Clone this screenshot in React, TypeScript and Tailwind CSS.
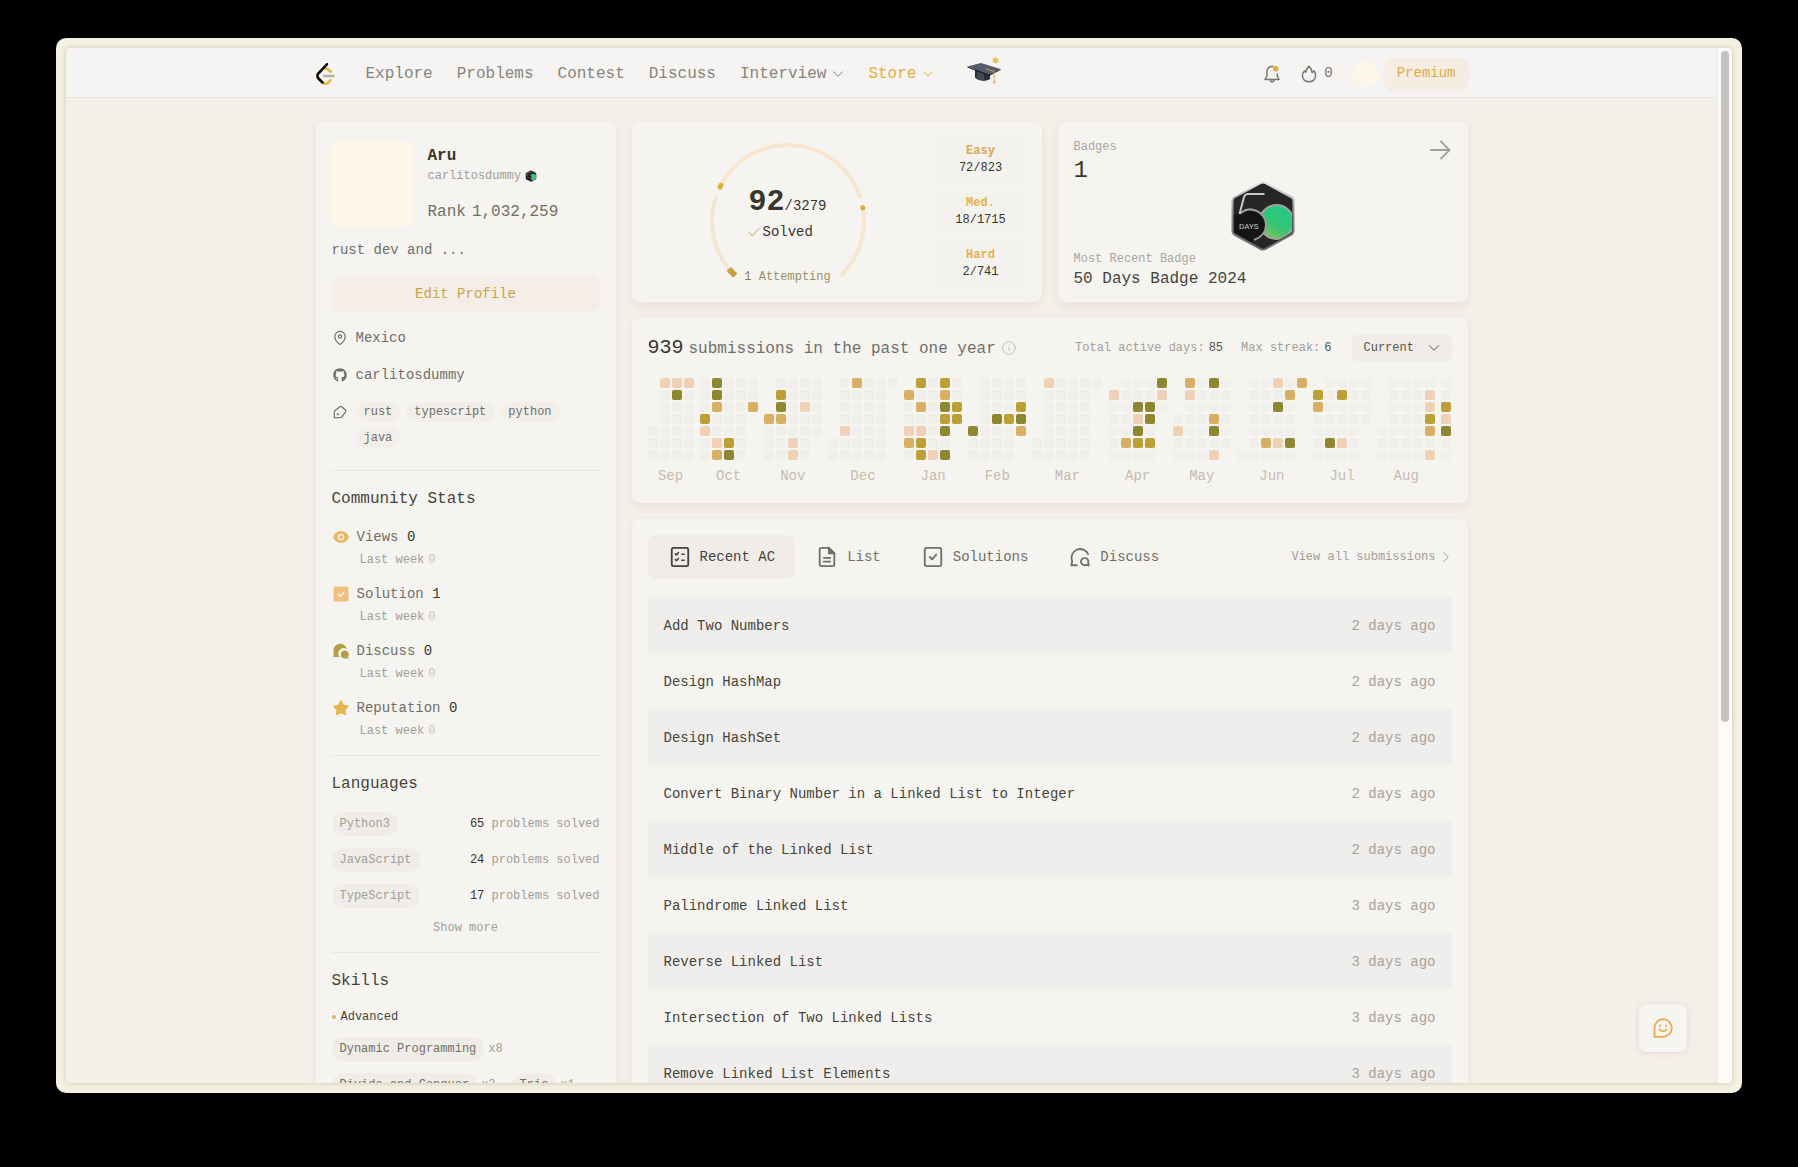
import React from "react";
import { FaGithub } from "react-icons/fa";

type Level = "P" | "T" | "G" | "O";

const levelClass: Record<Level, string> = {
  P: "bg-[#f0d1b7]",
  T: "bg-[#d7b066]",
  G: "bg-[#bca035]",
  O: "bg-[#8e8630]",
};

interface Month {
  label: string;
  start: number;
  days: number;
  marks: Record<string, Level>;
}

// Marks are keyed by "column-row" inside the month.
const months: Month[] = [
  { label: "Sep", start: 4, days: 24, marks: { "1-0": "P", "2-0": "P", "3-0": "P", "2-1": "O" } },
  {
    label: "Oct",
    start: 0,
    days: 31,
    marks: { "1-0": "O", "1-1": "O", "1-2": "T", "4-2": "T", "0-3": "G", "0-4": "P", "1-5": "P", "2-5": "G", "1-6": "T", "2-6": "O" },
  },
  {
    label: "Nov",
    start: 3,
    days: 30,
    marks: { "1-1": "G", "1-2": "O", "3-2": "P", "0-3": "T", "1-3": "T", "2-5": "P", "2-6": "P" },
  },
  { label: "Dec", start: 5, days: 31, marks: { "2-0": "T", "1-4": "P" } },
  {
    label: "Jan",
    start: 1,
    days: 31,
    marks: {
      "1-0": "G", "3-0": "G", "0-1": "T", "3-1": "T", "1-2": "T", "3-2": "O", "4-2": "G", "3-3": "G", "4-3": "G",
      "0-4": "P", "1-4": "P", "3-4": "O", "0-5": "T", "1-5": "G", "1-6": "G", "2-6": "P", "3-6": "O",
    },
  },
  {
    label: "Feb",
    start: 4,
    days: 29,
    marks: { "4-2": "G", "2-3": "O", "3-3": "G", "4-3": "O", "0-4": "O", "4-4": "T" },
  },
  { label: "Mar", start: 5, days: 31, marks: { "1-0": "P" } },
  {
    label: "Apr",
    start: 1,
    days: 30,
    marks: {
      "4-0": "O", "0-1": "P", "4-1": "P", "2-2": "O", "3-2": "O", "2-3": "P", "3-3": "O", "2-4": "O", "1-5": "T", "2-5": "G", "3-5": "G",
    },
  },
  {
    label: "May",
    start: 3,
    days: 31,
    marks: { "1-0": "T", "3-0": "O", "1-1": "P", "3-3": "T", "0-4": "P", "3-4": "O", "3-6": "P" },
  },
  {
    label: "Jun",
    start: 6,
    days: 30,
    marks: { "3-0": "P", "5-0": "T", "4-1": "T", "3-2": "O", "2-5": "T", "3-5": "P", "4-5": "O" },
  },
  { label: "Jul", start: 1, days: 31, marks: { "0-1": "G", "2-1": "G", "0-2": "T", "1-5": "O", "2-5": "P" } },
  { label: "Aug", start: 4, days: 31, marks: { "4-1": "P", "4-2": "P", "4-3": "G", "4-4": "T", "4-6": "P" } },
  { label: "", start: 0, days: 7, marks: { "0-2": "G", "0-3": "P", "0-4": "O" } },
];

const card = "rounded-lg bg-[#f6f4f1] shadow-[0_4px_10px_rgba(120,90,70,0.09)]";

function Chevron({ className }: { className: string }) {
  return (
    <svg viewBox="0 0 12 12" className={className} fill="none" stroke="currentColor" strokeLinecap="round" strokeLinejoin="round" aria-hidden="true">
      <path d="M1.5 3.8 6 8.3l4.5-4.5" />
    </svg>
  );
}

function LeetLogo() {
  return (
    <svg viewBox="0 0 95 111" className="h-[22px] w-[19px]" aria-hidden="true">
      <path
        fill="#e3b341"
        d="M68.0063 83.0664C70.5 80.5764 74.5366 80.5829 77.0223 83.0809C79.508 85.579 79.5015 89.6226 77.0078 92.1127L65.9346 103.17C55.7187 113.371 39.06 113.519 28.6718 103.513C28.6117 103.456 23.9861 98.9201 8.72653 83.957C-1.42528 74.0029 -2.43665 58.0749 7.11648 47.8464L24.9282 28.7745C34.4095 18.6219 51.887 17.5122 62.7275 26.2789L78.9048 39.362C81.6444 41.5776 82.0723 45.5985 79.8606 48.3429C77.6488 51.0873 73.635 51.5159 70.8954 49.3003L54.7182 36.2173C49.0488 31.6325 39.1314 32.2622 34.2394 37.5006L16.4274 56.5727C11.7767 61.5522 12.2861 69.574 17.6456 74.8292C28.851 85.8169 37.4869 94.2846 37.4969 94.2942C42.8977 99.496 51.6304 99.4184 56.9331 94.1234L68.0063 83.0664Z"
      />
      <path
        fill="#b9b09e"
        d="M41.1067 72.0014C37.5858 72.0014 34.7314 69.1421 34.7314 65.615C34.7314 62.0879 37.5858 59.2286 41.1067 59.2286H88.1245C91.6454 59.2286 94.4997 62.0879 94.4997 65.615C94.4997 69.1421 91.6454 72.0014 88.1245 72.0014H41.1067Z"
      />
      <path
        fill="#0c0b08"
        d="M49.9118 2.02335C52.3173 -0.55232 56.3517 -0.686894 58.9228 1.72277C61.494 4.13244 61.6284 8.17385 59.2229 10.7495L16.4276 56.5729C11.7768 61.552 12.2861 69.5738 17.6453 74.8292L37.4088 94.2091C39.9249 96.6764 39.968 100.72 37.505 103.24C35.042 105.761 31.0056 105.804 28.4895 103.337L8.72593 83.9567C-1.42529 74.0021 -2.43665 58.0741 7.1169 47.8463L49.9118 2.02335Z"
      />
    </svg>
  );
}

function GradCap() {
  return (
    <svg viewBox="0 0 36 32" className="h-8 w-9" aria-hidden="true">
      <path d="M8 13v8.500c3 3.600 11 4.500 15 1.500V16z" fill="#2c2f38" />
      <path d="M10 16v6.500c2 1.400 5 2 7 2V17z" fill="#454955" />
      <path d="M.5 10.500 14 7l19.500 6-11.500 5.500z" fill="#565c6d" />
      <path d="m.5 10.500 21.500 8 11.500-5.500v1l-11.500 6L.5 11.500z" fill="#23252d" />
      <path d="M19 13l8 2.500V22" fill="none" stroke="#c9a545" strokeWidth="1" />
      <path d="M27 21.500l1.800 5.500-3 .5z" fill="#e2be5a" />
      <path d="m28.500.500 1 2 2.300-.3-1 2.100 1.200 1.900-2.300.1-1.200 2-1.100-2-2.300-.1 1.200-1.900-1-2.100 2.200.3z" fill="#e6c04c" />
    </svg>
  );
}

function HexBadge({ className, id }: { className: string; id: string }) {
  return (
    <svg viewBox="0 0 64 70" className={className} role="img" aria-label="50 Days Badge">
      <defs>
        <linearGradient id={id + "-rim"} x1="0" y1="0" x2="0" y2="1">
          <stop offset="0" stopColor="#e4e3e0" />
          <stop offset="0.5" stopColor="#8a8a88" />
          <stop offset="1" stopColor="#6a6a68" />
        </linearGradient>
        <linearGradient id={id + "-green"} x1="0.2" y1="1" x2="0.7" y2="0">
          <stop offset="0" stopColor="#8cc152" />
          <stop offset="0.4" stopColor="#37c573" />
          <stop offset="1" stopColor="#1fcb87" />
        </linearGradient>
        <clipPath id={id + "-clip"}>
          <path d="M32 2.500 61 18.500v33L32 67.500 3 51.500v-33z" />
        </clipPath>
      </defs>
      <path
        d="M29.500 2.200q2.500-1.400 5 0L60 16q2.500 1.400 2.500 4v30q0 2.600-2.500 4L34.500 67.800q-2.500 1.400-5 0L4 54q-2.500-1.400-2.500-4V20q0-2.600 2.500-4z"
        fill="#262626"
        stroke={`url(#${id}-rim)`}
        strokeWidth="2"
      />
      <g clipPath={`url(#${id}-clip)`}>
        <circle cx="45.500" cy="41" r="17" fill={`url(#${id}-green)`} stroke="#a3a39f" strokeWidth="2" />
        <circle cx="18" cy="44" r="17" fill="#151515" />
        <path d="M9 32.500C20 23 35 32 35 44c0 7-5 12.500-12 15" fill="none" stroke="#9d9d9a" strokeWidth="2" />
        <path d="M33.500 13H17q-3 0-4 3L8.500 33" fill="none" stroke="#c9c9c5" strokeWidth="2" />
      </g>
      <text x="8" y="48" className="font-['Roboto',sans-serif] text-[8px]" fill="#c4c4c0">
        DAYS
      </text>
    </svg>
  );
}

function Header() {
  const nav = ["Explore", "Problems", "Contest", "Discuss"];
  return (
    <header className="h-[50px] shrink-0 border-b border-[#e6e4e2] bg-[#f5f4f2]">
      <div className="mx-auto flex h-full max-w-[1152px] items-center pt-0.5">
        <a href="#home" aria-label="Home" className="mr-8 w-[18px]">
          <LeetLogo />
        </a>
        <nav className="flex items-center gap-6 text-[16px] leading-6 text-[#85847d]">
          {nav.map((n) => (
            <a key={n} href={"#" + n.toLowerCase()}>
              {n}
            </a>
          ))}
          <button type="button" className="flex items-center gap-1.5">
            Interview
            <Chevron className="h-3 w-3" />
          </button>
          <button type="button" className="flex items-center gap-1.5 text-[#e5ad3c]">
            Store
            <Chevron className="h-3 w-3" />
          </button>
        </nav>
        <a href="#event" aria-label="Graduation event" className="ml-[33px] -mt-1">
          <GradCap />
        </a>
        <div className="ml-auto flex items-center">
          <button type="button" aria-label="Notifications" className="text-[#777670]">
            <svg viewBox="0 0 18 20" className="h-5 w-[18px]" fill="none" stroke="currentColor" strokeWidth="1.500" strokeLinecap="round" strokeLinejoin="round">
              <path d="M10 2.500C6.500 2 4 4.200 4 7.500V11.500L2 15.500h14L14.300 12V10" />
              <path d="M7.200 16c.3 1.300 1 1.900 1.900 1.900s1.600-.6 1.900-1.900" />
              <circle cx="12.800" cy="4.800" r="2.700" fill="#e0ac38" stroke="none" />
            </svg>
          </button>
          <button type="button" className="ml-5 flex items-center gap-[7px] text-[14px] text-[#777670]">
            <svg viewBox="0 0 16 18" className="h-[18px] w-4" fill="none" stroke="currentColor" strokeWidth="1.500" strokeLinejoin="round" strokeLinecap="round" aria-hidden="true">
              <path d="M8.200 1.200C5.800 3 5 4.700 4.900 7.200L3.400 6C2 7.600 1.400 9.300 1.400 10.800c0 3.500 2.900 6 6.600 6s6.600-2.500 6.600-6c0-1.900-.5-3.600-1.400-5l-2.100 1.900C10.900 5 10 2.800 8.200 1.200Z" />
            </svg>
            0
          </button>
          <button type="button" aria-label="Account" className="ml-5 h-6 w-6 rounded-full bg-[#fdf7e8] shadow-[0_0_3px_rgba(253,247,232,1)]" />
          <button type="button" className="ml-2 h-8 rounded-lg bg-[#f5ece2] px-3 text-[14px] text-[#e0ab44] shadow-[0_1px_3px_rgba(120,90,50,0.06)]">
            Premium
          </button>
        </div>
      </div>
    </header>
  );
}

const statIcons: Record<string, React.ReactNode> = {
  Views: (
    <svg viewBox="0 0 16 16" className="h-4 w-4" aria-hidden="true">
      <path d="M8 2C4.500 2 1.700 4.200.3 7.200q-.3.800 0 1.600C1.700 11.800 4.500 14 8 14s6.300-2.200 7.700-5.200q.3-.8 0-1.600C14.300 4.200 11.500 2 8 2Z" fill="#ebb663" />
      <circle cx="8" cy="8" r="2.600" fill="none" stroke="#f9f2e6" strokeWidth="1.500" />
    </svg>
  ),
  Solution: (
    <svg viewBox="0 0 16 16" className="h-4 w-4" aria-hidden="true">
      <rect x="0.500" y="0.500" width="15" height="15" rx="1.500" fill="#f0bf82" />
      <path d="m5 8 2.200 2.200L11 6.400" fill="none" stroke="#fbf4ea" strokeWidth="1.400" strokeLinecap="round" strokeLinejoin="round" />
    </svg>
  ),
  Discuss: (
    <svg viewBox="0 0 16 16" className="h-4 w-4" aria-hidden="true">
      <path d="M.5 14V7.500a6.600 6.600 0 0 1 13.100-1.300A5.200 5.200 0 0 0 6.800 14Z" fill="#b79e45" />
      <path d="M11.800 7.600a4 4 0 1 0 0 8h4l-.8-1.600a4 4 0 0 0-3.200-6.400Z" fill="#b79e45" />
    </svg>
  ),
  Reputation: (
    <svg viewBox="0 0 16 16" className="h-4 w-4" aria-hidden="true">
      <path
        d="M7.100 1q.9-1.400 1.800 0l1.800 3.700 4.200.7q1.400.4.500 1.500l-3 3 .7 4.300q.1 1.400-1.200.9L8 13.200l-3.900 1.900q-1.300.5-1.200-.9l.7-4.300-3-3Q-.3 5.800 1.100 5.400l4.200-.7z"
        fill="#e6b44b"
      />
    </svg>
  ),
};

function Divider({ className }: { className: string }) {
  return <hr className={"border-t border-[#eae7e3] " + className} />;
}

function ProfileCard() {
  const stats: [string, number][] = [
    ["Views", 0],
    ["Solution", 1],
    ["Discuss", 0],
    ["Reputation", 0],
  ];
  const langs: [string, number][] = [
    ["Python3", 65],
    ["JavaScript", 24],
    ["TypeScript", 17],
  ];
  const skills: [string, string][] = [
    ["Dynamic Programming", "x8"],
    ["Divide and Conquer", "x2"],
    ["Trie", "x1"],
  ];
  const heading = "h-6 text-[16px] leading-6 text-[#45443a]";
  return (
    <aside className={"w-[300px] shrink-0 px-4 pt-5 pb-6 " + card}>
      <div className="flex gap-4">
        <div className="h-[84px] w-20 rounded-lg bg-[#fdf7e8] shadow-[0_0_4px_rgba(253,247,232,1)]" />
        <div className="pt-0.5">
          <h1 className="text-[16px] leading-6 font-bold text-[#37362a]">Aru</h1>
          <p className="flex items-center gap-1 text-[12px] leading-4 text-[#a09e96]">
            carlitosdummy
            <HexBadge id="mini" className="h-3 w-3" />
          </p>
          <p className="mt-4 flex gap-1.5 text-[16px] leading-6 text-[#706f67]">
            Rank <span>1,032,259</span>
          </p>
        </div>
      </div>
      <p className="mt-3 text-[14px] leading-6 text-[#706f67]">rust dev and ...</p>
      <button type="button" className="mt-3.5 h-9 w-full rounded-lg bg-[#f4eee6] text-[14px] text-[#c9a345]">
        Edit Profile
      </button>
      <ul className="mt-4 flex flex-col gap-[17px] text-[14px] leading-5 text-[#706f67]">
        <li className="flex items-center gap-2">
          <svg viewBox="0 0 16 16" className="h-4 w-4 shrink-0" fill="none" stroke="currentColor" strokeWidth="1.200" aria-hidden="true">
            <path d="M8 14.500S2.800 11 2.800 6.600a5.200 5.200 0 0 1 10.400 0C13.200 11 8 14.500 8 14.500Z" strokeLinejoin="round" />
            <circle cx="8" cy="6.500" r="1.600" />
          </svg>
          Mexico
        </li>
        <li className="flex items-center gap-2">
          <span className="flex w-4 shrink-0 justify-center">
            <FaGithub className="h-3.5 w-3.5" />
          </span>
          <a href="#github">carlitosdummy</a>
        </li>
        <li className="flex items-start gap-2">
          <svg viewBox="0 0 16 16" className="mt-0.5 h-4 w-4 shrink-0" fill="none" stroke="currentColor" strokeWidth="1.200" strokeLinejoin="round" aria-hidden="true">
            <path d="M9.600 2.700 13.400 6q.8.800.2 1.800L10 12.600q-.6.800-1.600.9l-5 .4q-.9 0-1-.9L2.200 8.300q0-.9.700-1.500l4.900-4.100q.9-.7 1.800 0Z" />
            <circle cx="5.800" cy="10.300" r="0.500" />
          </svg>
          <span className="flex flex-wrap gap-1.5 text-[12px]">
            {["rust", "typescript", "python", "java"].map((t) => (
              <span key={t} className="rounded-full bg-[#f2eeea] px-2 leading-5">
                {t}
              </span>
            ))}
          </span>
        </li>
      </ul>

      <Divider className="mt-[22px]" />
      <h2 className={"mt-4 " + heading}>Community Stats</h2>
      <ul className="mt-4 flex flex-col gap-4">
        {stats.map(([name, n]) => (
          <li key={name}>
            <div className="flex items-center gap-2 text-[14px] leading-5 text-[#706f67]">
              <span className="ml-px">{statIcons[name]}</span>
              <span>
                {name} <span className="text-[#37362a]">{n}</span>
              </span>
            </div>
            <div className="mt-[5px] ml-7 flex gap-1 text-[12px] leading-4 text-[#a09e96]">
              Last week <span className="text-[#cbc9c3]">0</span>
            </div>
          </li>
        ))}
      </ul>

      <Divider className="mt-4" />
      <h2 className={"mt-4 " + heading}>Languages</h2>
      <ul className="mt-4 flex flex-col gap-3 text-[12px] text-[#a09e96]">
        {langs.map(([name, n]) => (
          <li key={name} className="flex items-center justify-between">
            <span className="rounded-full bg-[#f0ede9] px-2 leading-6">{name}</span>
            <span>
              <span className="text-[#37362a]">{n}</span> problems solved
            </span>
          </li>
        ))}
      </ul>
      <button type="button" className="mx-auto mt-3 block text-[12px] leading-4 text-[#a09e96]">
        Show more
      </button>

      <Divider className="mt-4" />
      <h2 className={"mt-4 " + heading}>Skills</h2>
      <h3 className="mt-4 flex items-center gap-[5px] text-[12px] leading-4 text-[#45443a]">
        <span className="h-1 w-1 rounded-full bg-[#eaa968]" />
        Advanced
      </h3>
      <ul className="mt-3 flex flex-wrap gap-x-4 gap-y-3 text-[12px] text-[#a09e96]">
        {skills.map(([name, n]) => (
          <li key={name} className="flex items-center gap-1">
            <span className="rounded-full bg-[#f0ede9] px-2 leading-6 text-[#706f67]">{name}</span>
            {n}
          </li>
        ))}
      </ul>
    </aside>
  );
}

function arc(from: number, to: number) {
  const cx = 80;
  const cy = 83;
  const r = 76;
  const p = (deg: number) => {
    const a = (deg * Math.PI) / 180;
    return `${(cx + r * Math.cos(a)).toFixed(2)} ${(cy + r * Math.sin(a)).toFixed(2)}`;
  };
  return `M${p(from)}A${r} ${r} 0 ${to - from > 180 ? 1 : 0} 1 ${p(to)}`;
}

function SolvedCard() {
  const levels = [
    { name: "Easy", value: "72/823", color: "text-[#d6aa50]" },
    { name: "Med.", value: "18/1715", color: "text-[#e6b343]" },
    { name: "Hard", value: "2/741", color: "text-[#e6ae50]" },
  ];
  return (
    <section className={"flex flex-1 gap-2 p-4 " + card}>
      <div className="relative flex flex-1 justify-center">
        <svg viewBox="0 0 160 148" className="h-[148px] w-40" fill="none" strokeLinecap="round" aria-hidden="true">
          <path d={arc(135, 198)} stroke="#f2e7d2" strokeWidth="4" />
          <path d={arc(207, 341)} stroke="#f8e6cf" strokeWidth="4" />
          <path d={arc(350, 405)} stroke="#f6e8d0" strokeWidth="4" />
          <path d={arc(134, 141)} stroke="#c7a040" strokeWidth="6" strokeLinecap="butt" />
          <path d={arc(206.500, 208)} stroke="#dfb237" strokeWidth="5" />
          <path d={arc(349.900, 350.200)} stroke="#dfa83c" strokeWidth="5" />
        </svg>
        <div className="absolute inset-0 flex flex-col items-center text-[#37362a]">
          <div className="mt-12">
            <div className="flex items-baseline leading-8">
              <span className="text-[30px] font-bold">92</span>
              <span className="text-[14px]">/3279</span>
            </div>
            <div className="flex items-center gap-0.5 text-[14px] leading-5">
              <svg viewBox="0 0 12 12" className="h-3 w-3 text-[#b7a746]" fill="none" stroke="currentColor" strokeWidth="1" strokeLinecap="round" strokeLinejoin="round" aria-hidden="true">
                <path d="m1 6.500 3.200 3.200L11 2.500" />
              </svg>
              Solved
            </div>
          </div>
          <p className="mt-auto mb-px text-[12px] leading-4 text-[#98926a]">
            <span className="text-[#817c50]">1</span> Attempting
          </p>
        </div>
      </div>
      <ul className="flex w-[90px] flex-col gap-2 text-center text-[12px]">
        {levels.map((l) => (
          <li key={l.name} className="flex h-11 flex-col justify-center rounded-md bg-[#f4f2ef] leading-[17px]">
            <span className={"font-semibold " + l.color}>{l.name}</span>
            <span className="text-[#37362a]">{l.value}</span>
          </li>
        ))}
      </ul>
    </section>
  );
}

function BadgeCard() {
  return (
    <section className={"relative flex flex-1 flex-col px-4 pt-[17px] pb-[15px] " + card}>
      <h2 className="text-[12px] leading-4 text-[#a9a69d]">Badges</h2>
      <p className="mt-1 text-[24px] leading-6 text-[#37362a]">1</p>
      <HexBadge id="badge" className="-mt-0.5 h-[70px] w-16 self-center" />
      <p className="text-[12px] leading-4 text-[#a9a69d]">Most Recent Badge</p>
      <p className="mt-1 text-[16px] leading-4 text-[#45443a]">50 Days Badge 2024</p>
      <a href="#badges" aria-label="All badges" className="absolute top-4 right-4 text-[#a3a197]">
        <svg viewBox="0 0 24 24" className="h-6 w-6" fill="none" stroke="currentColor" strokeWidth="1.800" strokeLinecap="round" strokeLinejoin="round">
          <path d="M3 12h18M13 3.500 21.500 12 13 20.500" />
        </svg>
      </a>
    </section>
  );
}

function MonthGrid({ month }: { month: Month }) {
  const cols = Math.ceil((month.start + month.days) / 7);
  const cells: React.ReactNode[] = [];
  for (let c = 0; c < cols; c++) {
    for (let r = 0; r < 7; r++) {
      const i = c * 7 + r;
      const on = i >= month.start && i < month.start + month.days;
      const mark = month.marks[`${c}-${r}`];
      cells.push(
        <span key={i} className={"h-[10px] w-[10px] rounded-[2px] " + (mark ? levelClass[mark] : on ? "bg-[#f1efec]" : "")} />,
      );
    }
  }
  return (
    <div className="flex flex-col items-center">
      <div className="grid grid-flow-col grid-rows-7 gap-0.5">{cells}</div>
      <span className="mt-1.5 h-5 text-[14px] leading-5 text-[#c5bcac]">{month.label}</span>
    </div>
  );
}

function SubmissionsCard() {
  return (
    <section className={"px-4 pt-4 pb-[17px] " + card}>
      <div className="flex h-7 items-center text-[12px] text-[#a09e96]">
        <h2 className="flex items-baseline gap-[5px] text-[16px] leading-6 text-[#706f67]">
          <span className="text-[20px] text-[#37362a]">939</span>
          submissions in the past one year
        </h2>
        <svg viewBox="0 0 14 14" className="ml-1.5 h-3.5 w-3.5 text-[#c5c2ba]" fill="none" stroke="currentColor" strokeWidth="1" strokeLinecap="round" aria-hidden="true">
          <circle cx="7" cy="7" r="6.300" />
          <path d="M7 6.500v3.300M7 4.300v.2" />
        </svg>
        <span className="ml-auto flex gap-1">
          Total active days: <span className="text-[#56554b]">85</span>
        </span>
        <span className="ml-[18px] flex gap-1">
          Max streak: <span className="text-[#56554b]">6</span>
        </span>
        <button type="button" className="ml-5 flex h-7 w-[100px] items-center justify-between rounded-lg bg-[#f0ede9] px-3 text-[#56554b]">
          Current
          <Chevron className="h-3 w-3" />
        </button>
      </div>
      <div className="mt-4 flex justify-between">
        {months.map((m, i) => (
          <MonthGrid key={i} month={m} />
        ))}
      </div>
    </section>
  );
}

const tabs: { name: string; icon: React.ReactNode }[] = [
  {
    name: "Recent AC",
    icon: (
      <>
        <rect x="3" y="2" width="18" height="20" rx="2" />
        <path d="m7 8.500 1.200 1.200 2-2.400M7 14.800l1.200 1.200 2-2.400M14 9h2.500M14 15.500h2.500" strokeWidth="1.800" />
      </>
    ),
  },
  {
    name: "List",
    icon: (
      <>
        <path d="M14 2H6a2 2 0 0 0-2 2v16a2 2 0 0 0 2 2h12a2 2 0 0 0 2-2V8Z" />
        <path d="M14 2v6h6Z" fill="currentColor" />
        <path d="M8.500 13h7M8.500 17h7" />
      </>
    ),
  },
  {
    name: "Solutions",
    icon: (
      <>
        <rect x="3" y="2" width="18" height="20" rx="2" />
        <path d="m8.500 12 2.500 2.500 4.500-5" />
      </>
    ),
  },
  {
    name: "Discuss",
    icon: (
      <>
        <path d="M8.500 21H2.500l1-4.500A9.200 9.200 0 1 1 20.800 9" />
        <path d="M17 13a4 4 0 1 0 1.800 7.600l2.700.6-.6-2.700A4 4 0 0 0 17 13Z" />
      </>
    ),
  },
];

const rows: [string, string][] = [
  ["Add Two Numbers", "2 days ago"],
  ["Design HashMap", "2 days ago"],
  ["Design HashSet", "2 days ago"],
  ["Convert Binary Number in a Linked List to Integer", "2 days ago"],
  ["Middle of the Linked List", "2 days ago"],
  ["Palindrome Linked List", "3 days ago"],
  ["Reverse Linked List", "3 days ago"],
  ["Intersection of Two Linked Lists", "3 days ago"],
  ["Remove Linked List Elements", "3 days ago"],
];

function RecentCard() {
  return (
    <section className={"p-4 " + card}>
      <div className="flex items-center">
        <div role="tablist" className="flex text-[14px]">
          {tabs.map((t, i) => (
            <button
              key={t.name}
              type="button"
              role="tab"
              aria-selected={i === 0}
              className={"flex h-11 items-center gap-2 rounded-lg px-5 " + (i === 0 ? "bg-[#f0ede9] text-[#45443a]" : "text-[#706f67]")}
            >
              <span className="flex h-6 w-6 items-center justify-center">
                <svg viewBox="0 0 24 24" className="h-[22px] w-[22px]" fill="none" stroke="currentColor" strokeWidth="2" strokeLinecap="round" strokeLinejoin="round" aria-hidden="true">
                  {t.icon}
                </svg>
              </span>
              {t.name}
            </button>
          ))}
        </div>
        <a href="#submissions" className="ml-auto flex items-center gap-1 text-[12px] text-[#a09e96]">
          View all submissions
          <Chevron className="h-3 w-3 -rotate-90" />
        </a>
      </div>
      <ul className="mt-[18px] text-[14px]">
        {rows.map(([title, when]) => (
          <li key={title} className="rounded-sm odd:bg-[#f0eeec]">
            <a href="#problem" className="flex h-14 items-center justify-between px-4 pt-0.5 text-[#45443a]">
              {title}
              <span className="text-[#a5a399]">{when}</span>
            </a>
          </li>
        ))}
      </ul>
    </section>
  );
}

export default function App() {
  return (
    <div className="h-screen bg-black px-14 pt-[38px] pb-[74px] font-['Liberation_Mono',monospace]">
      <div className="h-full rounded-[10px] bg-[#f4f1e1] p-[10px]">
        <div className="relative flex h-full overflow-hidden rounded-sm shadow-[0_0_5px_rgba(120,110,80,0.35)]">
          <div className="flex min-w-0 flex-1 flex-col overflow-hidden bg-[#f5efe9]">
            <Header />
            <main className="mx-auto flex w-full max-w-[1152px] items-start gap-4 pt-6">
              <ProfileCard />
              <div className="flex min-w-0 flex-1 flex-col gap-4">
                <div className="flex gap-4">
                  <SolvedCard />
                  <BadgeCard />
                </div>
                <SubmissionsCard />
                <RecentCard />
              </div>
            </main>
          </div>
          <div className="w-[15px] shrink-0 border-l border-[#e8e6e2] bg-[#fcfbfa] px-[3px] pt-[3px]">
            <div className="h-[65%] w-2 rounded-full bg-[#c3c3c2]" />
          </div>
          <button
            type="button"
            aria-label="Open chat"
            className="absolute right-[45px] bottom-[31px] flex h-12 w-12 items-center justify-center rounded-lg bg-[#f7f5f2] text-[#eba748] shadow-[0_1px_6px_rgba(120,90,60,0.14)]"
          >
            <svg viewBox="0 0 20 20" className="h-5 w-5" fill="none" stroke="currentColor" strokeWidth="1.800" strokeLinecap="round" strokeLinejoin="round">
              <path d="M10 1.200a8.800 8.800 0 1 1 0 17.600H1.500V10A8.700 8.700 0 0 1 10 1.200Z" />
              <path d="M6.500 11.500c1.800 2.200 5.200 2.200 7 0" />
              <path d="M7 7.500v.2M13 7.500v.2" strokeWidth="2" />
            </svg>
          </button>
        </div>
      </div>
    </div>
  );
}
